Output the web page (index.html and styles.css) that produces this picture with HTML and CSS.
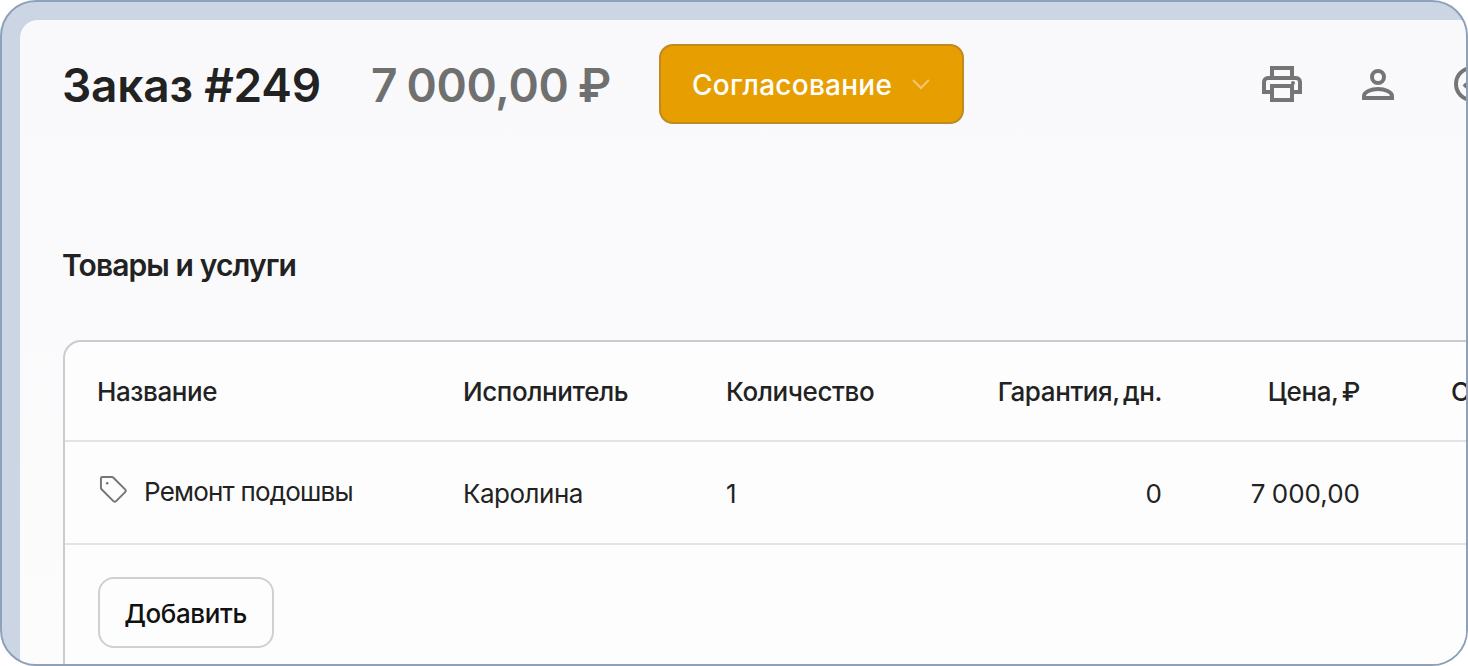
FILE: index.html
```html
<!DOCTYPE html>
<html lang="ru">
<head>
    <meta charset="UTF-8">
    <meta name="viewport" content="width=device-width, initial-scale=1.0">
    <title>Заказ #249</title>
    <link rel="stylesheet" href="styles.css">
</head>
<body>

    <div class="frame">
        <div class="panel">
            <header class="order-head">
                <h1>Заказ #249</h1>
                <span class="order-sum">7 000,00 ₽</span>
                <button type="button" class="status-btn">
                    <span>Согласование</span>
                    <svg class="chevron" width="20" height="12" viewBox="0 0 20 12" fill="none"><path d="M2 2l8 8 8-8" stroke="#f6c66f" stroke-width="2"/></svg>
                </button>
                <div class="head-icons">
                    <svg width="40" height="36" viewBox="0 0 40 36" fill="none" stroke="#757575" stroke-width="4">
                        <path d="M10 13V2h20v11"/>
                        <path d="M10 26H2V16a4 4 0 0 1 4-4h28a4 4 0 0 1 4 4v10h-8"/>
                        <path d="M10 20h20v14H10z"/>
                        <circle cx="31" cy="17" r="1" stroke-width="2" fill="#757575"/>
                    </svg>
                    <svg width="32" height="32" viewBox="0 0 32 32" fill="none" stroke="#757575" stroke-width="4">
                        <circle cx="16" cy="9" r="6"/>
                        <path d="M2 30v-2c0-4 7-7 14-7s14 3 14 7v2z"/>
                    </svg>
                    <svg width="36" height="36" viewBox="0 0 36 36" fill="none" stroke="#757575" stroke-width="4">
                        <circle cx="18" cy="18" r="16"/>
                        <path d="M10 18l6 6 11-12"/>
                    </svg>
                </div>
            </header>

            <h2>Товары и услуги</h2>

            <div class="items-card">
                <div class="row row-head">
                    <div>Название</div>
                    <div>Исполнитель</div>
                    <div>Количество</div>
                    <div class="num">Гарантия, дн.</div>
                    <div class="num">Цена, ₽</div>
                    <div>Сумма, ₽</div>
                </div>
                <div class="row row-item">
                    <div class="item-name">
                        <svg width="29" height="29" viewBox="0 0 30 30" fill="none" stroke="#757575" stroke-width="2" stroke-linejoin="round">
                            <path d="M2 3.5A1.5 1.5 0 0 1 3.5 2h9.7c.6 0 1.100.2 1.500.6l12.300 12.300a2 2 0 0 1 0 2.800l-9.300 9.300a2 2 0 0 1-2.800 0L2.600 14.700A2 2 0 0 1 2 13.200z"/>
                            <circle cx="8.500" cy="8.500" r="1.300" fill="#757575" stroke="none"/>
                        </svg>
                        <span>Ремонт подошвы</span>
                    </div>
                    <div>Каролина</div>
                    <div>1</div>
                    <div class="num">0</div>
                    <div class="num">7 000,00</div>
                    <div></div>
                </div>
                <div class="card-foot">
                    <button type="button" class="add-btn">Добавить</button>
                </div>
            </div>
        </div>
    </div>

</body>
</html>
```

FILE: styles.css
```css
html, body {
    margin: 0;
    height: 100%;
    background-color: #fff;
    overflow: hidden;
}
body {
    font-family: Inter, "Noto Sans", sans-serif;
    color: #222;
}
.frame {
    box-sizing: border-box;
    height: 666px;
    padding: 18px 0 0 18px;
    border: 2px solid #8fa1b9;
    border-radius: 36px;
    background-color: #cbd5e3;
    overflow: hidden;
}
.panel {
    height: 100%;
    padding: 24px 0 0 43px;
    background: linear-gradient(#f9f9fb, #fcfcfd);
    border-top-left-radius: 18px;
    overflow: hidden;
}
.order-head {
    display: flex;
    align-items: center;
    height: 80px;
    white-space: nowrap;
}
h1 {
    flex: none;
    margin: 2px 0 0 -1px;
    width: 309px;
    font-size: 46px;
    font-weight: 600;
    letter-spacing: -0.2px;
}
.order-sum {
    flex: none;
    margin-top: 2px;
    width: 288px;
    font-size: 46px;
    font-weight: 600;
    letter-spacing: -0.3px;
    word-spacing: -2px;
    color: #707070;
}
.status-btn {
    flex: none;
    display: flex;
    align-items: center;
    gap: 19px;
    box-sizing: border-box;
    width: 305px;
    height: 80px;
    padding: 0 31px;
    background-color: #e79e00;
    border: 2px solid #c08a1e;
    border-radius: 14px;
    color: #fff;
    font: 500 28px Inter, sans-serif;
    letter-spacing: 0.25px;
}
.status-btn span {
    margin-top: 2px;
}
.head-icons {
    flex: none;
    display: flex;
    align-items: center;
    gap: 60px;
    margin-left: 298px;
}
.head-icons svg {
    flex: none;
}
h2 {
    margin: 121px 0 55px -1px;
    font-size: 30px;
    line-height: 40px;
    font-weight: 600;
    letter-spacing: -0.9px;
}
.items-card {
    box-sizing: border-box;
    width: 1600px;
    height: 400px;
    background-color: #fdfdfe;
    border: 2px solid #c9ccd1;
    border-radius: 18px;
}
.row {
    display: grid;
    grid-template-columns: 366px 263px 200px 236px 198px 1fr;
    align-items: center;
    padding-left: 32px;
    border-bottom: 2px solid #e2e3e6;
    font-size: 26px;
    white-space: nowrap;
}
.row > div:last-child {
    padding-left: 91px;
}
.row-head {
    height: 98px;
    font-weight: 500;
    letter-spacing: -0.4px;
    word-spacing: -3px;
}
.row-item {
    height: 101px;
    letter-spacing: -0.5px;
}
.row-item > div {
    margin-top: 2px;
}
.row-item .num {
    letter-spacing: 0;
    word-spacing: -1px;
}
.num {
    text-align: right;
}
.item-name {
    display: flex;
    align-items: center;
    gap: 16px;
}
.row-item .item-name {
    margin-top: 0;
}
.item-name svg {
    flex: none;
    margin: -6px 0 0 2px;
}
.item-name span {
    margin-top: -2px;
    letter-spacing: -0.8px;
}
.card-foot {
    padding: 32px;
}
.add-btn {
    box-sizing: border-box;
    width: 176px;
    height: 71px;
    margin-left: 0.5px;
    padding-top: 2px;
    background-color: #fdfdfe;
    border: 2px solid #cfd0d2;
    border-radius: 16px;
    color: #111;
    font: 500 26px Inter, sans-serif;
    letter-spacing: -0.4px;
}
```
